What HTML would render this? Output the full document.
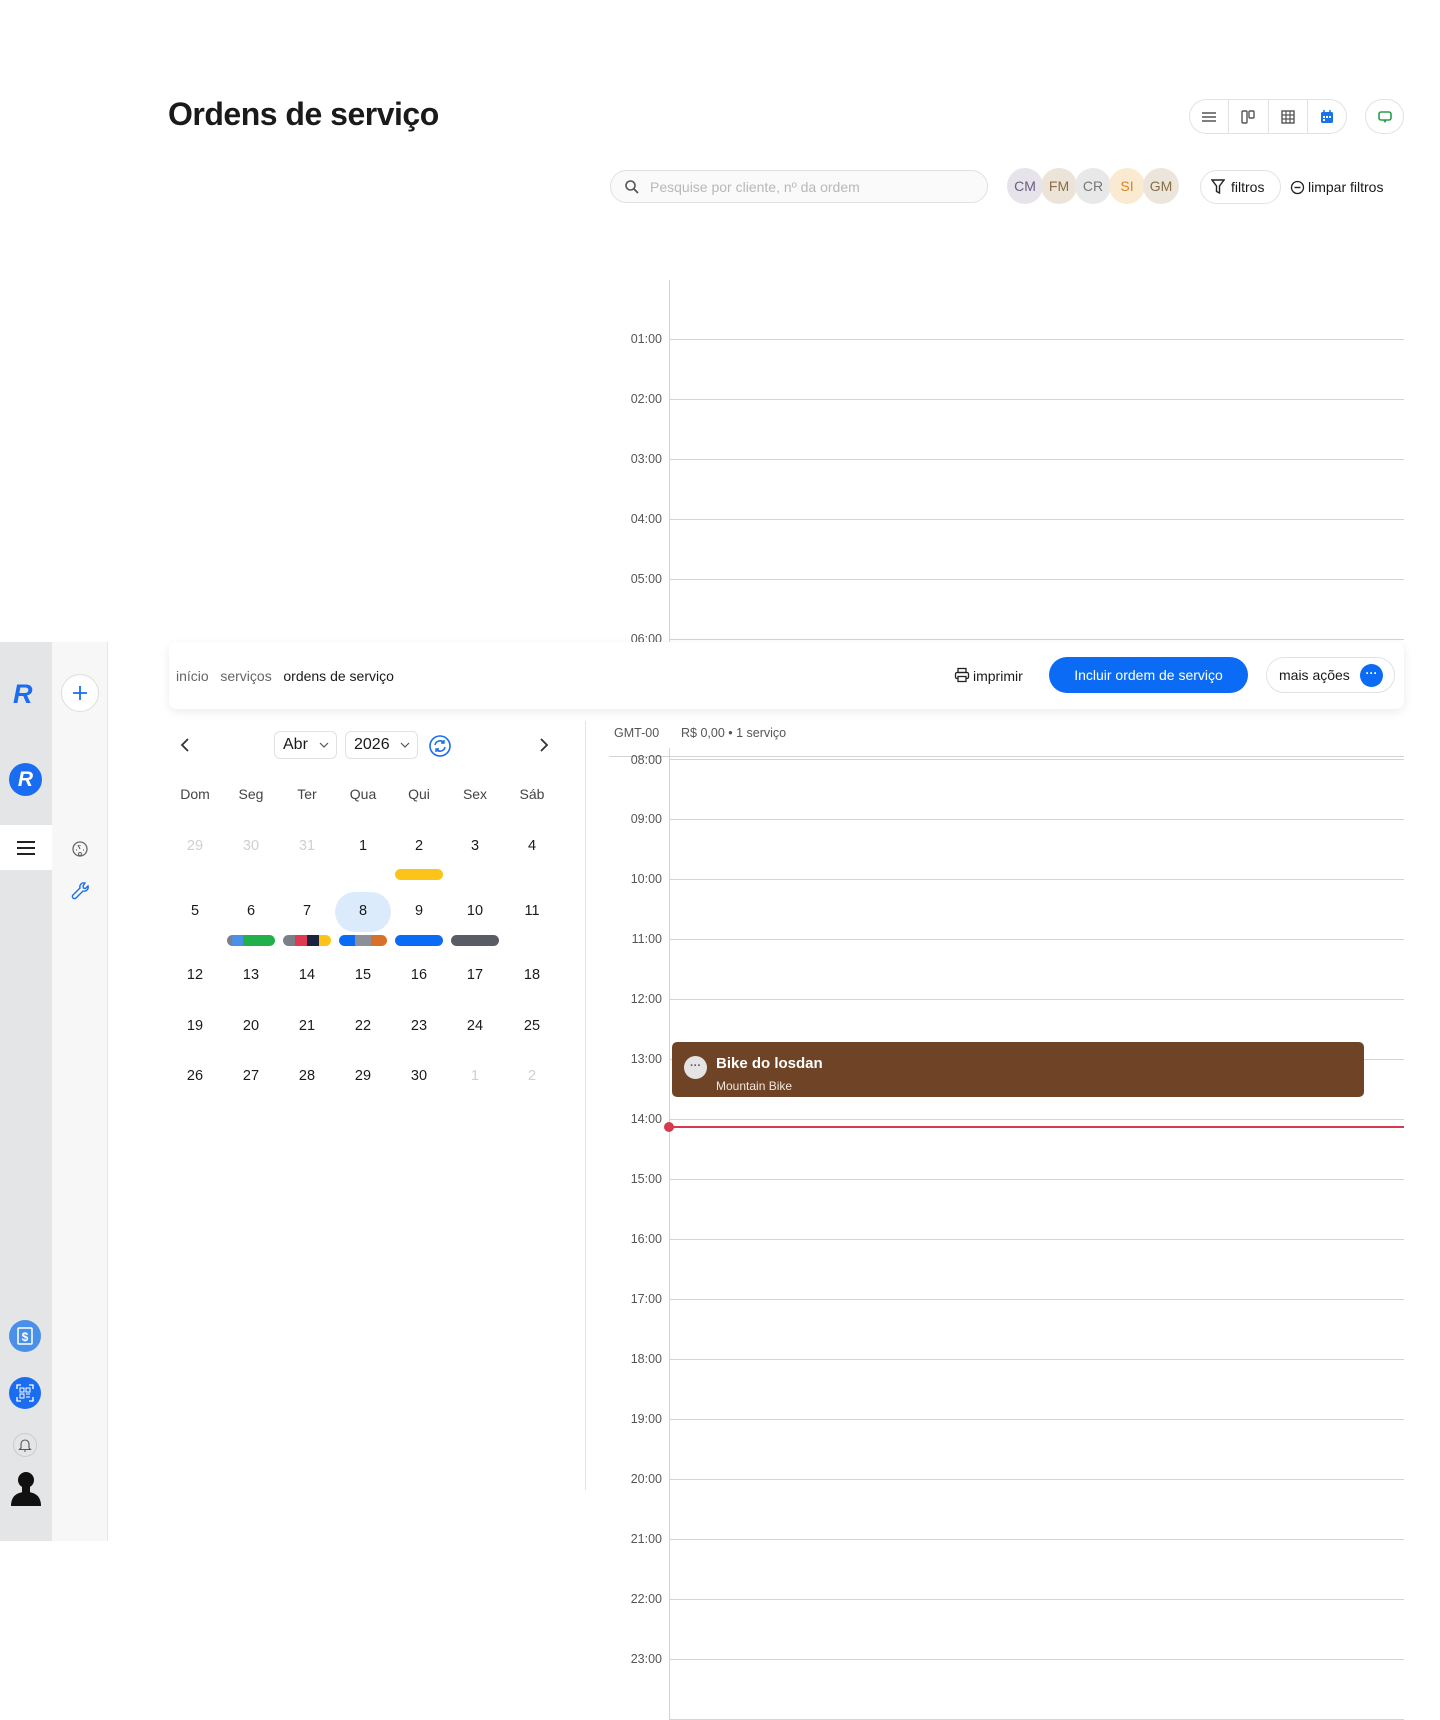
<!DOCTYPE html>
<html><head><meta charset="utf-8"><style>
*{box-sizing:border-box;margin:0;padding:0}
body{width:1440px;height:1720px;position:relative;background:#fff;font-family:"Liberation Sans",sans-serif;color:#1a1a1a;overflow:hidden}
.a{position:absolute}
.hl{position:absolute;left:669px;width:735px;height:1px;background:#d4d4d4}
.tl{position:absolute;left:610px;width:52px;text-align:right;font-size:12.5px;color:#555}
.wd{position:absolute;width:50px;margin-left:-25px;text-align:center;font-size:14px;color:#444}
.dn{position:absolute;width:50px;margin-left:-25px;text-align:center;font-size:14.5px;color:#1a1a1a}
.g{color:#d0d0d0}
.bar{position:absolute;width:48px;height:11px;margin-left:-24px;border-radius:6px;overflow:hidden;display:flex}
.av{position:absolute;top:168px;width:36px;height:36px;border-radius:50%;font-size:14px;text-align:center;line-height:36px;margin-left:-18px}
</style></head><body>

<div class="a" style="left:168px;top:96px;font-size:32px;font-weight:bold;letter-spacing:-0.5px">Ordens de serviço</div>

<div class="a" style="left:1189px;top:99px;width:158px;height:35px;border:1px solid #e2e2e2;border-radius:18px;display:flex">
 <div style="flex:1;border-right:1px solid #e2e2e2;display:flex;align-items:center;justify-content:center"><svg width="16" height="12"><path d="M1 2h14M1 6h14M1 10h14" stroke="#555" stroke-width="1.5"/></svg></div>
 <div style="flex:1;border-right:1px solid #e2e2e2;display:flex;align-items:center;justify-content:center"><svg width="16" height="16"><rect x="2" y="2" width="5" height="12" rx="1" fill="none" stroke="#555" stroke-width="1.4"/><rect x="9" y="2" width="5" height="7" rx="1" fill="none" stroke="#555" stroke-width="1.4"/></svg></div>
 <div style="flex:1;border-right:1px solid #e2e2e2;display:flex;align-items:center;justify-content:center"><svg width="16" height="16"><rect x="2" y="2" width="12" height="12" fill="none" stroke="#555" stroke-width="1.4"/><path d="M6 2v12M10 2v12M2 6h12M2 10h12" stroke="#555" stroke-width="1.2"/></svg></div>
 <div style="flex:1;display:flex;align-items:center;justify-content:center"><svg width="16" height="16"><rect x="2" y="3" width="12" height="11" rx="1.5" fill="#1a73e8"/><path d="M5 1v3M11 1v3" stroke="#1a73e8" stroke-width="1.5"/><rect x="4" y="7" width="2" height="2" fill="#fff"/><rect x="7" y="7" width="2" height="2" fill="#fff"/><rect x="10" y="7" width="2" height="2" fill="#fff"/><rect x="4" y="10" width="2" height="2" fill="#fff"/></svg></div>
</div>
<div class="a" style="left:1365px;top:99px;width:39px;height:35px;border:1px solid #e2e2e2;border-radius:18px;display:flex;align-items:center;justify-content:center"><svg width="16" height="16"><rect x="2" y="3" width="12" height="8" rx="2" fill="none" stroke="#2a9d4a" stroke-width="1.6"/><path d="M6 11l2 3 2-3z" fill="#2a9d4a"/></svg></div>

<div class="a" style="left:610px;top:170px;width:378px;height:33px;border:1px solid #e0e0e0;border-radius:17px;background:#fafafa"></div>
<svg class="a" style="left:624px;top:179px" width="16" height="16"><circle cx="6.5" cy="6.5" r="4.5" fill="none" stroke="#555" stroke-width="1.6"/><path d="M10 10l4 4" stroke="#555" stroke-width="1.8"/></svg>
<div class="a" style="left:650px;top:179px;font-size:14px;color:#b8b8b8">Pesquise por cliente, nº da ordem</div>

<div class="av" style="left:1025px;background:#e6e3ea;color:#6a5f80">CM</div>
<div class="av" style="left:1059px;background:#ece4d8;color:#8a6d45">FM</div>
<div class="av" style="left:1093px;background:#e8e8e8;color:#777">CR</div>
<div class="av" style="left:1127px;background:#fbead2;color:#d98423">SI</div>
<div class="av" style="left:1161px;background:#ebe5dc;color:#8a6d45">GM</div>

<div class="a" style="left:1200px;top:170px;width:81px;height:34px;border:1px solid #e2e2e2;border-radius:17px;font-size:14px;line-height:32px;padding-left:30px">filtros</div>
<svg class="a" style="left:1211px;top:179px" width="14" height="16"><path d="M1 1h12l-4.5 6v7l-3-1.5V7z" fill="none" stroke="#222" stroke-width="1.4"/></svg>
<svg class="a" style="left:1290px;top:180px" width="15" height="15"><circle cx="7.5" cy="7.5" r="6" fill="none" stroke="#222" stroke-width="1.3"/><path d="M4.5 7.5h6" stroke="#222" stroke-width="1.4"/></svg>
<div class="a" style="left:1308px;top:179px;font-size:14px">limpar filtros</div>

<div class="a" style="left:669px;top:280px;width:1px;height:362px;background:#d4d4d4"></div>
<div class="hl" style="top:339px"></div><div class="tl" style="top:332px">01:00</div>
<div class="hl" style="top:399px"></div><div class="tl" style="top:392px">02:00</div>
<div class="hl" style="top:459px"></div><div class="tl" style="top:452px">03:00</div>
<div class="hl" style="top:519px"></div><div class="tl" style="top:512px">04:00</div>
<div class="hl" style="top:579px"></div><div class="tl" style="top:572px">05:00</div>
<div class="hl" style="top:639px"></div><div class="tl" style="top:632px">06:00</div>

<div class="a" style="left:0;top:642px;width:52px;height:899px;background:#e4e5e7"></div>
<div class="a" style="left:52px;top:642px;width:56px;height:899px;background:#f7f7f8;border-right:1px solid #e6e6e6"></div>
<div class="a" style="left:0;top:825px;width:52px;height:45px;background:#fff"></div>
<div class="a" style="left:13px;top:679px;font-size:27px;font-weight:bold;font-style:italic;color:#1a6cf0">R</div>
<div class="a" style="left:61px;top:674px;width:38px;height:38px;border:1px solid #ddd;border-radius:50%;background:#fff"></div>
<svg class="a" style="left:71px;top:684px" width="18" height="18"><path d="M9 2v14M2 9h14" stroke="#1a6cf0" stroke-width="1.8"/></svg>
<div class="a" style="left:9px;top:763px;width:33px;height:33px;border-radius:50%;background:#1a6cf0;color:#fff;font-weight:bold;font-style:italic;font-size:21px;text-align:center;line-height:33px">R</div>
<svg class="a" style="left:16px;top:840px" width="20" height="16"><path d="M1 2h18M1 8h18M1 14h18" stroke="#222" stroke-width="2"/></svg>
<svg class="a" style="left:71px;top:840px" width="18" height="18"><circle cx="9" cy="9" r="7" fill="none" stroke="#666" stroke-width="1.3"/><path d="M9 9l-2-4M5 10h1M12 10h1M9 5v1" stroke="#666" stroke-width="1.2"/><circle cx="9" cy="14" r="1.5" fill="none" stroke="#666"/></svg>
<svg class="a" style="left:70px;top:881px" width="20" height="20"><path d="M15 2a4 4 0 0 0-5 5L3 14a1.5 1.5 0 0 0 3 3l7-7a4 4 0 0 0 5-5l-2.5 2.5-2-.5-.5-2z" fill="none" stroke="#1a6cf0" stroke-width="1.4"/></svg>
<div class="a" style="left:9px;top:1320px;width:32px;height:32px;border-radius:50%;background:#4a90e8"></div>
<svg class="a" style="left:16px;top:1327px" width="18" height="18"><rect x="2" y="1" width="14" height="16" rx="1" fill="none" stroke="#fff" stroke-width="1.5"/><text x="9" y="14" font-size="12" font-weight="bold" fill="#fff" text-anchor="middle" font-family="Liberation Sans">$</text></svg>
<div class="a" style="left:9px;top:1377px;width:32px;height:32px;border-radius:50%;background:#1a6cf0"></div>
<svg class="a" style="left:15px;top:1383px" width="20" height="20"><path d="M2 6V2h4M14 2h4v4M18 14v4h-4M6 18H2v-4" fill="none" stroke="#fff" stroke-width="1.3"/><path d="M5 5h4v4H5zM11 5h4v4h-4zM5 11h4v4H5zM11 11h4M11 14h4" fill="none" stroke="#fff" stroke-width="1"/></svg>
<div class="a" style="left:13px;top:1433px;width:24px;height:24px;border-radius:50%;border:1px solid #ccc"></div>
<svg class="a" style="left:18px;top:1438px" width="14" height="14"><path d="M3 10V6a4 4 0 0 1 8 0v4l1.5 1.5h-11zM6 13h2" fill="none" stroke="#555" stroke-width="1.1"/></svg>
<svg class="a" style="left:10px;top:1470px" width="32" height="36"><circle cx="16" cy="10" r="8" fill="#111"/><path d="M1 36c0-10 6-14 15-14s15 4 15 14z" fill="#111"/><rect x="12" y="16" width="8" height="8" fill="#111"/></svg>

<div class="a" style="left:169px;top:642px;width:1235px;height:67px;background:#fff;border-radius:8px;box-shadow:0 3px 10px rgba(0,0,0,0.08)"></div>
<div class="a" style="left:176px;top:668px;font-size:14px;color:#666">início &nbsp;&nbsp;serviços &nbsp;&nbsp;<span style="color:#1a1a1a">ordens de serviço</span></div>
<svg class="a" style="left:954px;top:667px" width="16" height="16"><rect x="4" y="1.5" width="8" height="4" fill="none" stroke="#222" stroke-width="1.3"/><rect x="1.5" y="5.5" width="13" height="6" rx="1.5" fill="none" stroke="#222" stroke-width="1.3"/><rect x="4" y="9.5" width="8" height="5" fill="#fff" stroke="#222" stroke-width="1.3"/></svg>
<div class="a" style="left:973px;top:668px;font-size:14px">imprimir</div>
<div class="a" style="left:1049px;top:657px;width:199px;height:36px;border-radius:18px;background:#0b6bf5;color:#fff;font-size:14px;text-align:center;line-height:36px">Incluir ordem de serviço</div>
<div class="a" style="left:1266px;top:657px;width:129px;height:36px;border:1px solid #e2e2e2;border-radius:18px;font-size:14px;line-height:34px;padding-left:12px">mais ações</div>
<div class="a" style="left:1360px;top:664px;width:23px;height:23px;border-radius:50%;background:#0b6bf5;color:#fff;font-size:12px;text-align:center;line-height:19px;font-weight:bold">···</div>

<svg class="a" style="left:178px;top:737px" width="14" height="16"><path d="M10 2L4 8l6 6" fill="none" stroke="#333" stroke-width="1.8"/></svg>
<div class="a" style="left:274px;top:731px;width:63px;height:28px;border:1px solid #e2e2e2;border-radius:6px;font-size:16px;line-height:26px;padding-left:8px">Abr</div>
<svg class="a" style="left:319px;top:741px" width="10" height="8"><path d="M1 2l4 4 4-4" fill="none" stroke="#555" stroke-width="1.2"/></svg>
<div class="a" style="left:345px;top:731px;width:73px;height:28px;border:1px solid #e2e2e2;border-radius:6px;font-size:16px;line-height:26px;padding-left:8px">2026</div>
<svg class="a" style="left:400px;top:741px" width="10" height="8"><path d="M1 2l4 4 4-4" fill="none" stroke="#555" stroke-width="1.2"/></svg>
<svg class="a" style="left:428px;top:734px" width="24" height="24"><circle cx="12" cy="12" r="10" fill="none" stroke="#1a6cf0" stroke-width="1.6"/><path d="M7 11a5 5 0 0 1 9-2M17 13a5 5 0 0 1-9 2" fill="none" stroke="#1a6cf0" stroke-width="1.6"/><path d="M16 6v3h-3M8 18v-3h3" fill="none" stroke="#1a6cf0" stroke-width="1.4"/></svg>
<svg class="a" style="left:537px;top:737px" width="14" height="16"><path d="M4 2l6 6-6 6" fill="none" stroke="#333" stroke-width="1.8"/></svg>

<div class="wd" style="left:195px;top:786px">Dom</div><div class="wd" style="left:251px;top:786px">Seg</div><div class="wd" style="left:307px;top:786px">Ter</div><div class="wd" style="left:363px;top:786px">Qua</div><div class="wd" style="left:419px;top:786px">Qui</div><div class="wd" style="left:475px;top:786px">Sex</div><div class="wd" style="left:532px;top:786px">Sáb</div>

<div class="a" style="left:335px;top:892px;width:56px;height:40px;border-radius:20px;background:#dcebfc"></div>

<div class="dn g" style="left:195px;top:838px">29</div><div class="dn g" style="left:251px;top:838px">30</div><div class="dn g" style="left:307px;top:838px">31</div><div class="dn" style="left:363px;top:838px">1</div><div class="dn" style="left:419px;top:838px">2</div><div class="dn" style="left:475px;top:838px">3</div><div class="dn" style="left:532px;top:838px">4</div>
<div class="dn" style="left:195px;top:903px">5</div><div class="dn" style="left:251px;top:903px">6</div><div class="dn" style="left:307px;top:903px">7</div><div class="dn" style="left:363px;top:903px">8</div><div class="dn" style="left:419px;top:903px">9</div><div class="dn" style="left:475px;top:903px">10</div><div class="dn" style="left:532px;top:903px">11</div>
<div class="dn" style="left:195px;top:967px">12</div><div class="dn" style="left:251px;top:967px">13</div><div class="dn" style="left:307px;top:967px">14</div><div class="dn" style="left:363px;top:967px">15</div><div class="dn" style="left:419px;top:967px">16</div><div class="dn" style="left:475px;top:967px">17</div><div class="dn" style="left:532px;top:967px">18</div>
<div class="dn" style="left:195px;top:1018px">19</div><div class="dn" style="left:251px;top:1018px">20</div><div class="dn" style="left:307px;top:1018px">21</div><div class="dn" style="left:363px;top:1018px">22</div><div class="dn" style="left:419px;top:1018px">23</div><div class="dn" style="left:475px;top:1018px">24</div><div class="dn" style="left:532px;top:1018px">25</div>
<div class="dn" style="left:195px;top:1068px">26</div><div class="dn" style="left:251px;top:1068px">27</div><div class="dn" style="left:307px;top:1068px">28</div><div class="dn" style="left:363px;top:1068px">29</div><div class="dn" style="left:419px;top:1068px">30</div><div class="dn g" style="left:475px;top:1068px">1</div><div class="dn g" style="left:532px;top:1068px">2</div>

<div class="bar" style="left:419px;top:869px;background:#fcc419"></div>
<div class="bar" style="left:251px;top:935px"><i style="flex:1;background:#7a7f88"></i><i style="flex:2;background:#4a90e8"></i><i style="flex:6;background:#22b04b"></i></div>
<div class="bar" style="left:307px;top:935px"><i style="flex:2;background:#7a7f88"></i><i style="flex:2;background:#e03a50"></i><i style="flex:2;background:#1a2340"></i><i style="flex:2;background:#fcc419"></i></div>
<div class="bar" style="left:363px;top:935px"><i style="flex:1;background:#0b6bf5"></i><i style="flex:1;background:#8a8f98"></i><i style="flex:1;background:#d9702a"></i></div>
<div class="bar" style="left:419px;top:935px;background:#0b6bf5"></div>
<div class="bar" style="left:475px;top:935px;background:#585c64"></div>

<div class="a" style="left:585px;top:721px;width:1px;height:769px;background:#e4e4e4"></div>

<div class="a" style="left:614px;top:726px;font-size:12.5px;color:#555">GMT-00</div>
<div class="a" style="left:681px;top:726px;font-size:12.5px;color:#555">R$ 0,00 • 1 serviço</div>
<div class="a" style="left:669px;top:748px;width:1px;height:972px;background:#d4d4d4"></div>
<div class="a" style="left:609px;top:756px;width:795px;height:1px;background:#d4d4d4"></div>
<div class="hl" style="top:759px"></div><div class="tl" style="top:755px;height:12px;overflow:hidden;line-height:10px">08:00</div>
<div class="hl" style="top:819px"></div><div class="tl" style="top:812px">09:00</div>
<div class="hl" style="top:879px"></div><div class="tl" style="top:872px">10:00</div>
<div class="hl" style="top:939px"></div><div class="tl" style="top:932px">11:00</div>
<div class="hl" style="top:999px"></div><div class="tl" style="top:992px">12:00</div>
<div class="hl" style="top:1059px"></div><div class="tl" style="top:1052px">13:00</div>
<div class="hl" style="top:1119px"></div><div class="tl" style="top:1112px">14:00</div>
<div class="hl" style="top:1179px"></div><div class="tl" style="top:1172px">15:00</div>
<div class="hl" style="top:1239px"></div><div class="tl" style="top:1232px">16:00</div>
<div class="hl" style="top:1299px"></div><div class="tl" style="top:1292px">17:00</div>
<div class="hl" style="top:1359px"></div><div class="tl" style="top:1352px">18:00</div>
<div class="hl" style="top:1419px"></div><div class="tl" style="top:1412px">19:00</div>
<div class="hl" style="top:1479px"></div><div class="tl" style="top:1472px">20:00</div>
<div class="hl" style="top:1539px"></div><div class="tl" style="top:1532px">21:00</div>
<div class="hl" style="top:1599px"></div><div class="tl" style="top:1592px">22:00</div>
<div class="hl" style="top:1659px"></div><div class="tl" style="top:1652px">23:00</div>
<div class="hl" style="top:1719px"></div>

<div class="a" style="left:672px;top:1042px;width:692px;height:55px;background:#6f4426;border-radius:5px"></div>
<div class="a" style="left:684px;top:1056px;width:23px;height:23px;border-radius:50%;background:#e4e4e4;color:#555;font-size:11px;text-align:center;line-height:20px;font-weight:bold">···</div>
<div class="a" style="left:716px;top:1055px;font-size:15px;color:#fff;font-weight:bold">Bike do losdan</div>
<div class="a" style="left:716px;top:1079px;font-size:12px;color:#f0e6de">Mountain Bike</div>

<div class="a" style="left:669px;top:1126px;width:735px;height:2px;background:#d63a4e"></div>
<div class="a" style="left:664px;top:1122px;width:10px;height:10px;border-radius:50%;background:#d63a4e"></div>

</body></html>
